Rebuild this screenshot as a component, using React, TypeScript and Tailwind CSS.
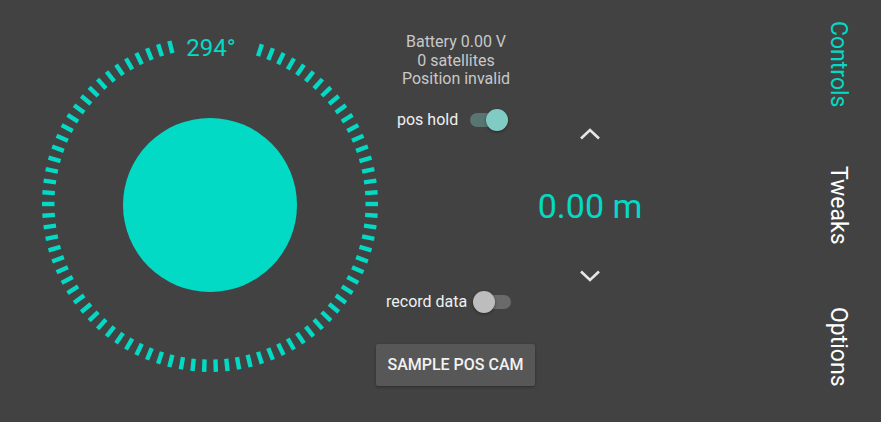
import React from "react";

const TEAL = "#03dac5";

const ticks: number[] = [];
for (let a = -178; a <= 180; a += 4) {
  if (a > -13 && a < 17) continue;
  ticks.push(a);
}

const Compass = ({ heading }: { heading: number }) => {
  return (
    <div className="relative w-[336px] h-[336px]">
      <svg width="336" height="336" viewBox="0 0 336 336" className="absolute inset-0">
        {ticks.map((a) => (
          <rect
            key={a}
            x="165.8"
            y="0"
            width="4.4"
            height="12.5"
            fill={TEAL}
            transform={`rotate(${a} 168 168)`}
          />
        ))}
        <circle cx="168" cy="169" r="87" fill={TEAL} />
      </svg>
      <div className="absolute top-0 left-0 right-0 flex justify-center">
        <span className="text-[24px] leading-[24px] text-[#03dac5] ml-[2px]">{heading}°</span>
      </div>
    </div>
  );
};

const Switch = ({ on }: { on: boolean }) => (
  <div
    className={`relative w-[34px] h-[14px] rounded-full ${on ? "bg-[#587571]" : "bg-[#6a6a6a]"}`}
  >
    <div
      className={`absolute top-[-4px] w-[22px] h-[22px] rounded-full shadow-[0_1px_3px_rgba(0,0,0,0.4)] ${
        on ? "right-[-4px] bg-[#80cbc4]" : "left-[-4px] bg-[#bdbdbd]"
      }`}
    />
  </div>
);

const Chevron = ({ up }: { up: boolean }) => (
  <svg width="24" height="24" viewBox="0 0 24 24">
    <polyline
      points={up ? "3,16.5 12,8 21,16.5" : "3,7.5 12,16 21,7.5"}
      fill="none"
      stroke="#e6e6e6"
      strokeWidth="2.6"
    />
  </svg>
);

const NavTab = ({ label, active }: { label: string; active?: boolean }) => (
  <div className="h-[141px] flex items-center justify-center">
    <span className={`[writing-mode:vertical-rl] ${active ? "text-[#03dac5]" : "text-white"}`}>
      {label}
    </span>
  </div>
);

export default function App() {
  return (
    <div
      className="w-[881px] h-[422px] bg-[#424242] flex overflow-hidden"
      style={{ fontFamily: "Roboto, 'Liberation Sans', sans-serif" }}
    >
      <div className="w-[376px] shrink-0 pl-[42px] pt-[36px]">
        <Compass heading={294} />
      </div>

      <div className="w-[160px] shrink-0 flex flex-col">
        <div className="pt-[33px] text-center text-[16px] leading-[18.5px] text-[#c8c8c8]">
          <div>Battery 0.00 V</div>
          <div>0 satellites</div>
          <div>Position invalid</div>
        </div>
        <div className="mt-[19.5px] h-[24px] flex items-center ml-[21px] gap-[12px]">
          <span className="text-[16px] text-[#f0f0f0]">pos hold</span>
          <Switch on={true} />
        </div>
        <div className="mt-[158px] h-[24px] flex items-center ml-[10px] gap-[10px]">
          <span className="text-[16px] text-[#f0f0f0]">record data</span>
          <Switch on={false} />
        </div>
        <button className="mt-[30px] w-[159px] h-[42px] rounded-[2px] bg-[#575757] text-[16px] font-medium text-[#f2f2f2] shadow-[0_1px_3px_rgba(0,0,0,0.35)]">
          SAMPLE POS CAM
        </button>
      </div>

      <div className="w-[108px] shrink-0 flex flex-col items-center pt-[122px]">
        <Chevron up={true} />
        <div className="mt-[40px] h-[40px] text-[34px] leading-[40px] text-[#03dac5] whitespace-nowrap">
          0.00 m
        </div>
        <div className="mt-[38px]">
          <Chevron up={false} />
        </div>
      </div>

      <div className="flex-1" />

      <div className="w-[81px] shrink-0 flex flex-col pr-[5px] mt-[-6px] text-[23px]">
        <NavTab label="Controls" active />
        <NavTab label="Tweaks" />
        <NavTab label="Options" />
      </div>
    </div>
  );
}
